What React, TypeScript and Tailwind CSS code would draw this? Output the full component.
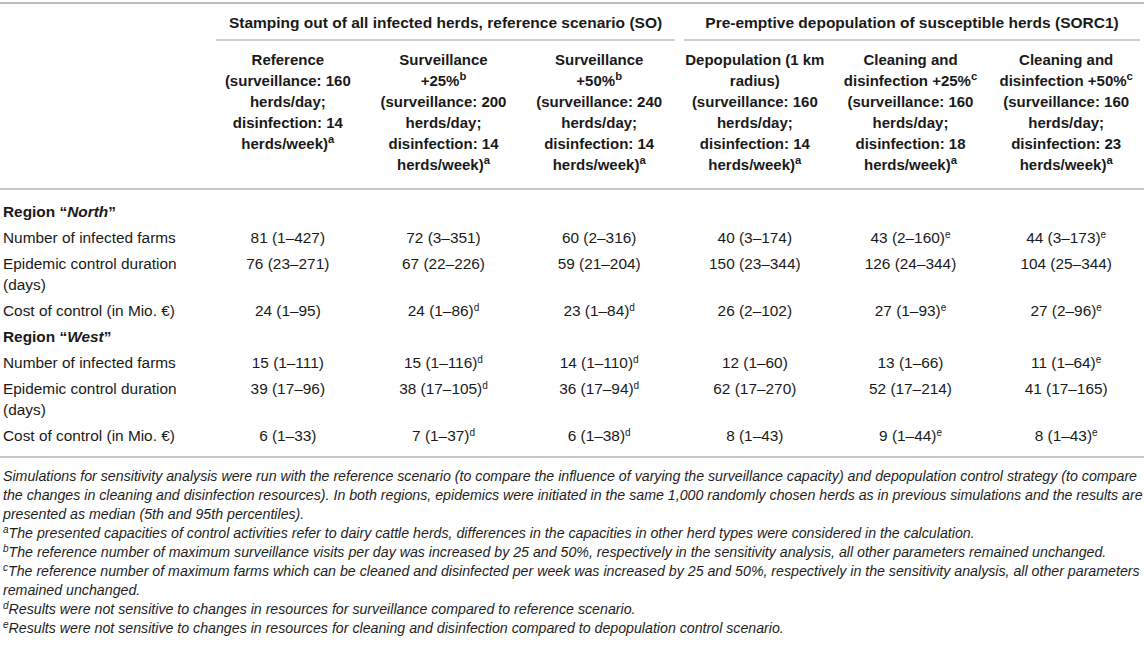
import React from 'react';

type Cell = { v: string; s?: string };

const HEADERS: { lines: React.ReactNode[] }[] = [
  { lines: ['Reference', '(surveillance: 160', 'herds/day;', 'disinfection: 14', <>herds/week)<sup>a</sup></>] },
  { lines: ['Surveillance', <>+25%<sup>b</sup></>, '(surveillance: 200', 'herds/day;', 'disinfection: 14', <>herds/week)<sup>a</sup></>] },
  { lines: ['Surveillance', <>+50%<sup>b</sup></>, '(surveillance: 240', 'herds/day;', 'disinfection: 14', <>herds/week)<sup>a</sup></>] },
  { lines: ['Depopulation (1 km', 'radius)', '(surveillance: 160', 'herds/day;', 'disinfection: 14', <>herds/week)<sup>a</sup></>] },
  { lines: ['Cleaning and', <>disinfection +25%<sup>c</sup></>, '(surveillance: 160', 'herds/day;', 'disinfection: 18', <>herds/week)<sup>a</sup></>] },
  { lines: ['Cleaning and', <>disinfection +50%<sup>c</sup></>, '(surveillance: 160', 'herds/day;', 'disinfection: 23', <>herds/week)<sup>a</sup></>] },
];

const c = (v: string, s?: string): Cell => ({ v, s });

const REGIONS: { name: string; rows: { label: string[]; cells: Cell[] }[] }[] = [
  {
    name: 'North',
    rows: [
      { label: ['Number of infected farms'], cells: [c('81 (1–427)'), c('72 (3–351)'), c('60 (2–316)'), c('40 (3–174)'), c('43 (2–160)', 'e'), c('44 (3–173)', 'e')] },
      { label: ['Epidemic control duration', '(days)'], cells: [c('76 (23–271)'), c('67 (22–226)'), c('59 (21–204)'), c('150 (23–344)'), c('126 (24–344)'), c('104 (25–344)')] },
      { label: ['Cost of control (in Mio. €)'], cells: [c('24 (1–95)'), c('24 (1–86)', 'd'), c('23 (1–84)', 'd'), c('26 (2–102)'), c('27 (1–93)', 'e'), c('27 (2–96)', 'e')] },
    ],
  },
  {
    name: 'West',
    rows: [
      { label: ['Number of infected farms'], cells: [c('15 (1–111)'), c('15 (1–116)', 'd'), c('14 (1–110)', 'd'), c('12 (1–60)'), c('13 (1–66)'), c('11 (1–64)', 'e')] },
      { label: ['Epidemic control duration', '(days)'], cells: [c('39 (17–96)'), c('38 (17–105)', 'd'), c('36 (17–94)', 'd'), c('62 (17–270)'), c('52 (17–214)'), c('41 (17–165)')] },
      { label: ['Cost of control (in Mio. €)'], cells: [c('6 (1–33)'), c('7 (1–37)', 'd'), c('6 (1–38)', 'd'), c('8 (1–43)'), c('9 (1–44)', 'e'), c('8 (1–43)', 'e')] },
    ],
  },
];

const NOTES: { sup?: string; text: string }[] = [
  { text: 'Simulations for sensitivity analysis were run with the reference scenario (to compare the influence of varying the surveillance capacity) and depopulation control strategy (to compare' },
  { text: 'the changes in cleaning and disinfection resources). In both regions, epidemics were initiated in the same 1,000 randomly chosen herds as in previous simulations and the results are' },
  { text: 'presented as median (5th and 95th percentiles).' },
  { sup: 'a', text: 'The presented capacities of control activities refer to dairy cattle herds, differences in the capacities in other herd types were considered in the calculation.' },
  { sup: 'b', text: 'The reference number of maximum surveillance visits per day was increased by 25 and 50%, respectively in the sensitivity analysis, all other parameters remained unchanged.' },
  { sup: 'c', text: 'The reference number of maximum farms which can be cleaned and disinfected per week was increased by 25 and 50%, respectively in the sensitivity analysis, all other parameters' },
  { text: 'remained unchanged.' },
  { sup: 'd', text: 'Results were not sensitive to changes in resources for surveillance compared to reference scenario.' },
  { sup: 'e', text: 'Results were not sensitive to changes in resources for cleaning and disinfection compared to depopulation control scenario.' },
];

const GRID = 'grid grid-cols-[210px_repeat(6,minmax(0,1fr))]';

export default function App() {
  return (
    <div className="w-[1144px] h-[648px] overflow-hidden bg-white text-[#1a1a1a] font-['Liberation_Sans',Arial,sans-serif]">
      {/* Top rule */}
      <div className="pt-[2px]">
        <div className="h-[2px] bg-[#bdbdbd]" />
      </div>

      {/* Group headers */}
      <div className={GRID}>
        <div />
        <div className="col-span-3 pl-[6px] pr-[2px] pt-[8px]">
          <div className="text-center text-[15.5px] font-bold leading-[21px] pb-[6px] border-b-2 border-[#cfcfcf]">
            Stamping out of all infected herds, reference scenario (SO)
          </div>
        </div>
        <div className="col-span-3 pl-[7px] pr-[4px] pt-[8px]">
          <div className="text-center text-[15.5px] font-bold leading-[21px] pb-[6px] border-b-2 border-[#cfcfcf]">
            Pre-emptive depopulation of susceptible herds (SORC1)
          </div>
        </div>
      </div>

      {/* Column headers */}
      <div className={`${GRID} pt-[8px] pb-[13px] border-b-2 border-[#c6c6c6]`}>
        <div />
        {HEADERS.map((h, i) => (
          <div key={i} className="text-center text-[15px] font-bold leading-[21px] whitespace-nowrap">
            {h.lines.map((l, j) => (
              <div key={j}>{l}</div>
            ))}
          </div>
        ))}
      </div>

      {/* Body */}
      <div className="pt-[8px] pb-[8px] border-b-2 border-[#c6c6c6] text-[15.4px] leading-[21px]">
        {REGIONS.map((r) => (
          <div key={r.name}>
            <div className="px-[3px] py-[2.5px] font-bold">
              Region “<span className="italic">{r.name}</span>”
            </div>
            {r.rows.map((row, i) => (
              <div key={i} className={`${GRID} py-[2.5px]`}>
                <div className="pl-[3px]">
                  {row.label.map((l, j) => (
                    <div key={j}>{l}</div>
                  ))}
                </div>
                {row.cells.map((cell, j) => (
                  <div key={j} className="text-center whitespace-nowrap">
                    {cell.v}
                    {cell.s && <sup className="text-[10px]">{cell.s}</sup>}
                  </div>
                ))}
              </div>
            ))}
          </div>
        ))}
      </div>

      {/* Footnotes */}
      <div className="pt-[9px] px-[3px] italic text-[14.2px] leading-[19px] text-[#1e1e1e]">
        {NOTES.map((n, i) => (
          <div key={i} className="whitespace-nowrap">
            {n.sup && <sup className="text-[10px]">{n.sup}</sup>}
            {n.text}
          </div>
        ))}
      </div>
    </div>
  );
}
